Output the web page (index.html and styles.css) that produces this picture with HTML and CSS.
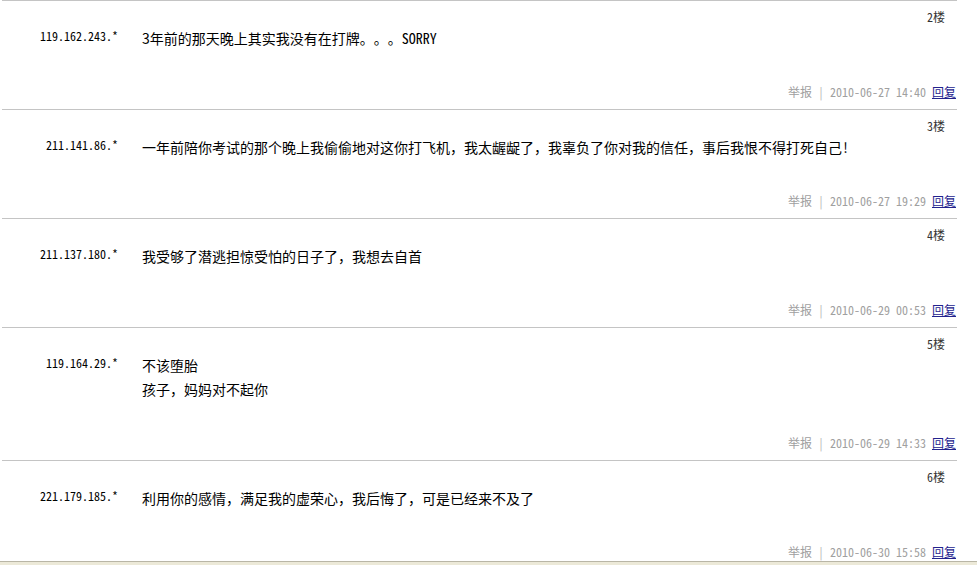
FILE: index.html
```html
<!DOCTYPE html>
<html lang="zh-CN">
<head>
    <meta charset="UTF-8">
    <title>回复列表</title>
    <link rel="stylesheet" href="styles.css">
</head>
<body>
    <div class="thread">
        <div class="post">
            <div class="floor">2楼</div>
            <div class="main">
                <div class="ip">119.162.243.*</div>
                <div class="content">3年前的那天晚上其实我没有在打牌。。。<span class="latin">SORRY</span></div>
            </div>
            <div class="footer">
                <span class="report">举报</span> <span class="sep">|</span> <span class="time">2010-06-27 14:40</span> <a href="#" class="reply">回复</a>
            </div>
        </div>

        <div class="post">
            <div class="floor">3楼</div>
            <div class="main">
                <div class="ip">211.141.86.*</div>
                <div class="content">一年前陪你考试的那个晚上我偷偷地对这你打飞机，我太龌龊了，我辜负了你对我的信任，事后我恨不得打死自己<span class="latin">!</span></div>
            </div>
            <div class="footer">
                <span class="report">举报</span> <span class="sep">|</span> <span class="time">2010-06-27 19:29</span> <a href="#" class="reply">回复</a>
            </div>
        </div>

        <div class="post">
            <div class="floor">4楼</div>
            <div class="main">
                <div class="ip">211.137.180.*</div>
                <div class="content">我受够了潜逃担惊受怕的日子了，我想去自首</div>
            </div>
            <div class="footer">
                <span class="report">举报</span> <span class="sep">|</span> <span class="time">2010-06-29 00:53</span> <a href="#" class="reply">回复</a>
            </div>
        </div>

        <div class="post">
            <div class="floor">5楼</div>
            <div class="main">
                <div class="ip">119.164.29.*</div>
                <div class="content">不该堕胎<br>孩子，妈妈对不起你</div>
            </div>
            <div class="footer">
                <span class="report">举报</span> <span class="sep">|</span> <span class="time">2010-06-29 14:33</span> <a href="#" class="reply">回复</a>
            </div>
        </div>

        <div class="post">
            <div class="floor">6楼</div>
            <div class="main">
                <div class="ip">221.179.185.*</div>
                <div class="content">利用你的感情，满足我的虚荣心，我后悔了，可是已经来不及了</div>
            </div>
            <div class="footer">
                <span class="report">举报</span> <span class="sep">|</span> <span class="time">2010-06-30 15:58</span> <a href="#" class="reply">回复</a>
            </div>
        </div>
    </div>

    <div class="window-edge"></div>
</body>
</html>
```

FILE: styles.css
```css
body {
    margin: 0;
    background: #fff;
    font-family: "Noto Sans Mono CJK SC", "Noto Sans CJK SC", "Liberation Mono", monospace;
    font-size: 12px;
    color: #000;
    overflow: hidden;
    text-spacing-trim: space-all;
}

.thread {
    margin-left: 2px;
    width: 955px;
}

.post {
    border-top: 1px solid #c4c4c4;
    padding: 8px 0 8px 0;
}

.floor {
    height: 16px;
    line-height: 16px;
    text-align: right;
    padding-right: 12px;
    color: #333;
}

.main {
    display: flex;
    align-items: flex-start;
    margin: 1px 0 33px 0;
}

.ip {
    width: 116px;
    flex-shrink: 0;
    text-align: right;
    line-height: 20px;
    font-size: 12px;
}

.content {
    margin-left: 24px;
    font-family: "Noto Sans CJK SC", sans-serif;
    font-size: 14px;
    line-height: 24px;
}

.content .latin {
    font-family: "Noto Sans Mono CJK SC", "Liberation Mono", monospace;
    font-size: 14px;
}

.footer {
    height: 18px;
    line-height: 18px;
    text-align: right;
    padding-right: 1px;
    color: #a0a0a0;
}

.footer .sep {
    color: #b4b4b4;
}

.reply {
    color: #23238e;
    text-decoration: underline;
}

.window-edge {
    position: fixed;
    left: 0;
    right: 0;
    bottom: 0;
    height: 3px;
    border-top: 1px solid #b9b6a6;
    background: #ece9d8;
}
```
